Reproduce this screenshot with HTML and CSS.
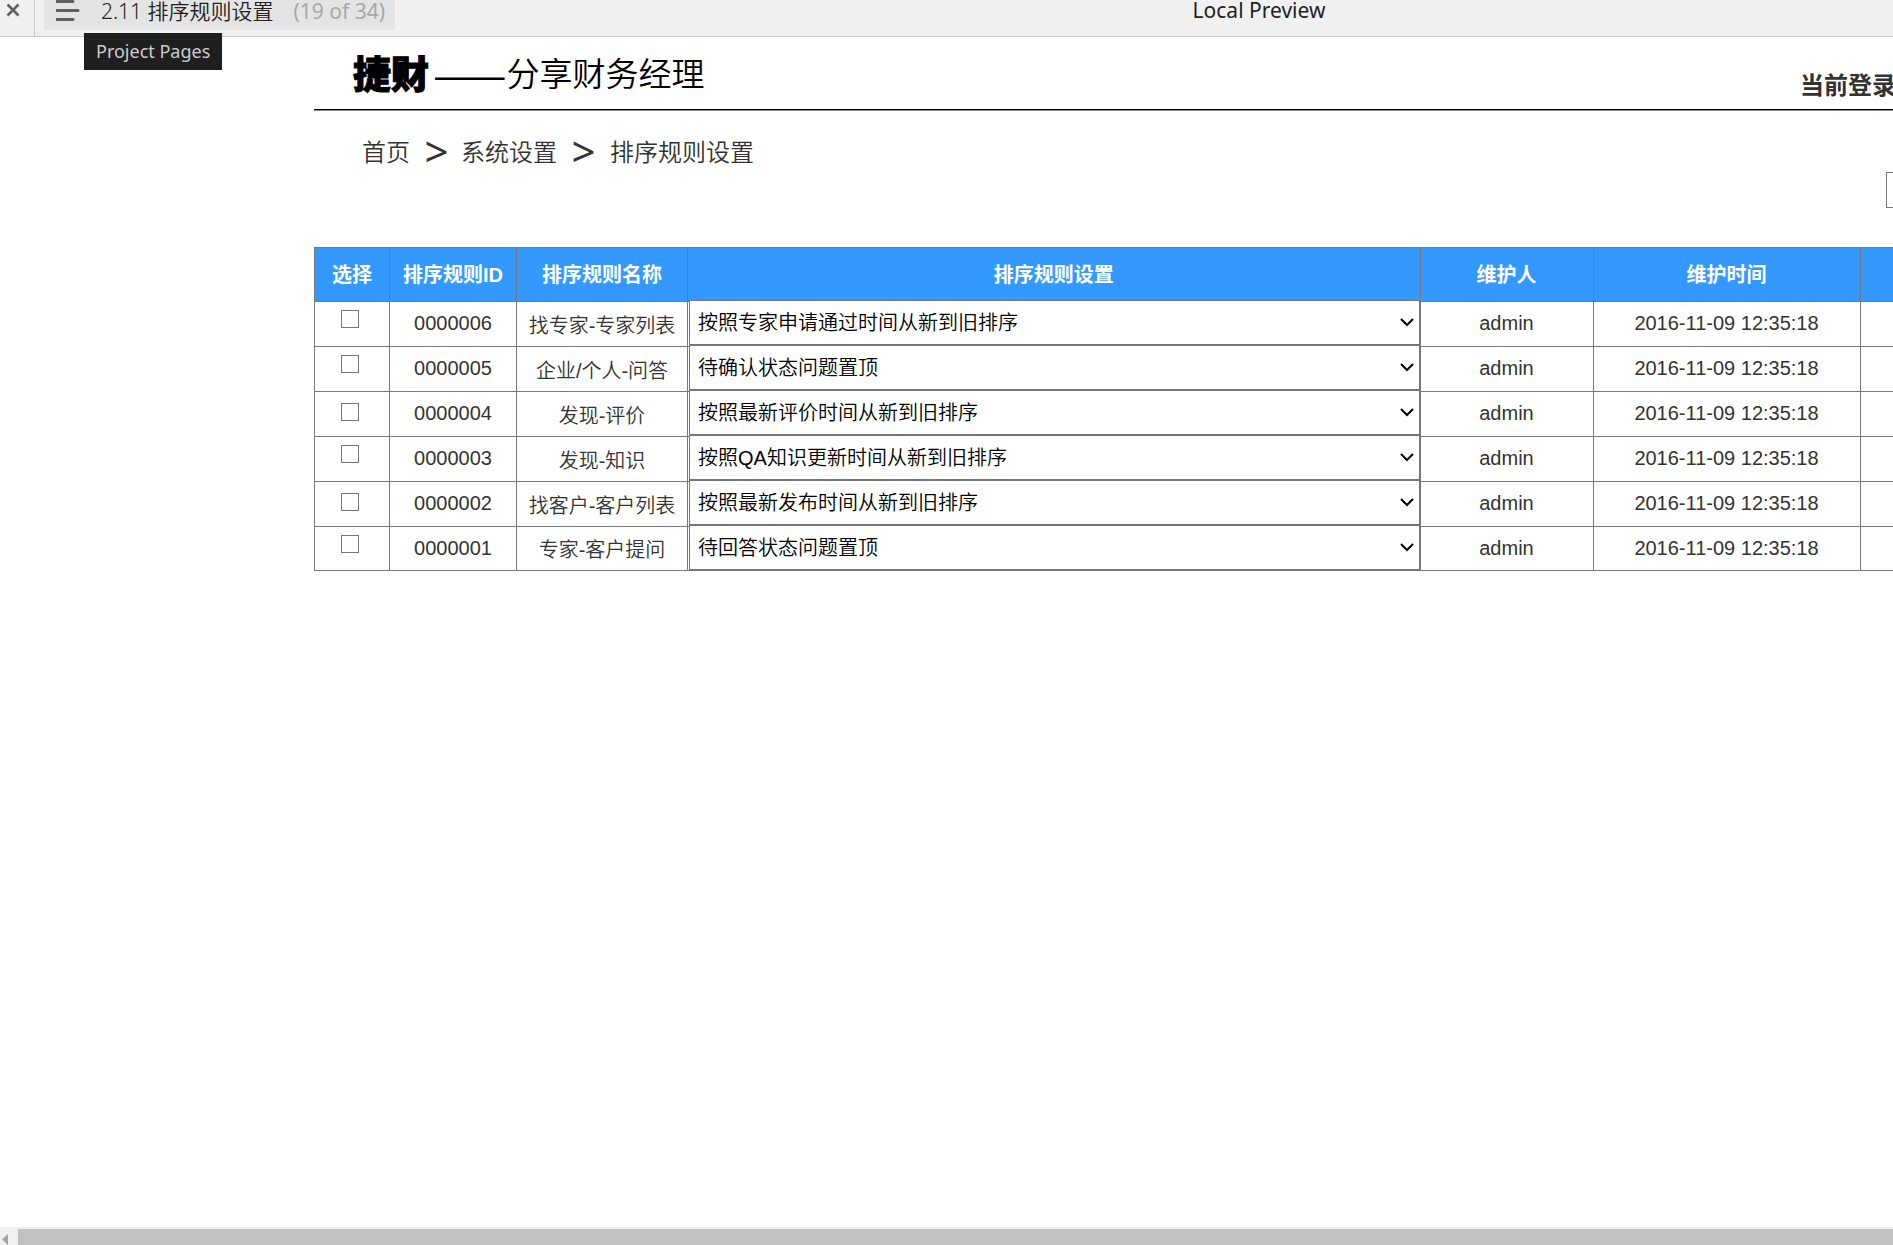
FILE: index.html
```html
<!DOCTYPE html>
<html lang="zh-CN">
<head>
<meta charset="utf-8">
<title>2.11 排序规则设置</title>
<link rel="stylesheet" href="styles.css">
</head>
<body>
<header class="toolbar">
  <button class="close" type="button" aria-label="Close"><svg width="14" height="14" viewBox="0 0 14 14"><path d="M1.5 1.5L12.5 12.5M12.5 1.5L1.5 12.5" stroke="#606060" stroke-width="2.6"/></svg></button>
  <button class="pages" type="button">
    <svg width="24" height="22" viewBox="0 0 24 22"><path d="M1 1.5H17M1 10.5H22M1 19.5H17" stroke="#606060" stroke-width="3" stroke-linecap="round"/></svg>
    <span class="page-name">2.11 排序规则设置</span>
    <span class="count">(19 of 34)</span>
  </button>
  <div class="tooltip" role="tooltip">Project Pages</div>
  <span class="preview">Local Preview</span>
</header>
<main class="content">
  <div class="brand-bar">
    <h1 class="brand"><strong>捷财</strong><span class="dash">——</span><span>分享财务经理</span></h1>
    <div class="login">当前登录</div>
  </div>
  <nav class="crumbs"><a href="#">首页</a><span class="sep">&gt;</span><a href="#">系统设置</a><span class="sep">&gt;</span><a class="here" href="#">排序规则设置</a></nav>
  <div class="search"><input type="text" aria-label="搜索"></div>
  <table class="rules">
    <colgroup><col class="c-pick"><col class="c-id"><col class="c-name"><col><col class="c-user"><col class="c-time"><col class="c-more"></colgroup>
    <thead><tr><th>选择</th><th>排序规则ID</th><th>排序规则名称</th><th>排序规则设置</th><th>维护人</th><th>维护时间</th><th></th></tr></thead>
    <tbody>
      <tr><td class="pick"><input type="checkbox" aria-label="0000006"></td><td>0000006</td><td class="name">找专家-专家列表</td><td class="rule"><div class="field"><select aria-label="排序规则 0000006"><option>按照专家申请通过时间从新到旧排序</option></select><svg class="arrow" viewBox="0 0 14 10"><path d="M1 2L7 8L13 2"/></svg></div></td><td>admin</td><td>2016-11-09 12:35:18</td><td></td></tr>
      <tr><td class="pick"><input type="checkbox" aria-label="0000005"></td><td>0000005</td><td class="name">企业/个人-问答</td><td class="rule"><div class="field"><select aria-label="排序规则 0000005"><option>待确认状态问题置顶</option></select><svg class="arrow" viewBox="0 0 14 10"><path d="M1 2L7 8L13 2"/></svg></div></td><td>admin</td><td>2016-11-09 12:35:18</td><td></td></tr>
      <tr><td class="pick low"><input type="checkbox" aria-label="0000004"></td><td>0000004</td><td class="name">发现-评价</td><td class="rule"><div class="field"><select aria-label="排序规则 0000004"><option>按照最新评价时间从新到旧排序</option></select><svg class="arrow" viewBox="0 0 14 10"><path d="M1 2L7 8L13 2"/></svg></div></td><td>admin</td><td>2016-11-09 12:35:18</td><td></td></tr>
      <tr><td class="pick"><input type="checkbox" aria-label="0000003"></td><td>0000003</td><td class="name">发现-知识</td><td class="rule"><div class="field"><select aria-label="排序规则 0000003"><option>按照QA知识更新时间从新到旧排序</option></select><svg class="arrow" viewBox="0 0 14 10"><path d="M1 2L7 8L13 2"/></svg></div></td><td>admin</td><td>2016-11-09 12:35:18</td><td></td></tr>
      <tr><td class="pick low"><input type="checkbox" aria-label="0000002"></td><td>0000002</td><td class="name">找客户-客户列表</td><td class="rule"><div class="field"><select aria-label="排序规则 0000002"><option>按照最新发布时间从新到旧排序</option></select><svg class="arrow" viewBox="0 0 14 10"><path d="M1 2L7 8L13 2"/></svg></div></td><td>admin</td><td>2016-11-09 12:35:18</td><td></td></tr>
      <tr><td class="pick"><input type="checkbox" aria-label="0000001"></td><td>0000001</td><td class="name">专家-客户提问</td><td class="rule"><div class="field"><select aria-label="排序规则 0000001"><option>待回答状态问题置顶</option></select><svg class="arrow" viewBox="0 0 14 10"><path d="M1 2L7 8L13 2"/></svg></div></td><td>admin</td><td>2016-11-09 12:35:18</td><td></td></tr>
    </tbody>
  </table>
</main>
<div class="scrollbar"><svg width="18" height="18" viewBox="0 0 18 18"><path d="M8 7V18L2 12.5Z" fill="#a3a3a3"/></svg><div class="thumb"></div></div>
</body>
</html>
```
FILE: styles.css
```css
* { box-sizing: border-box; }
body {
  margin: 0;
  min-height: 100vh;
  display: flex;
  flex-direction: column;
  overflow: hidden;
  background: #fff;
  color: #333;
  font: 20px/24px "Liberation Sans", "Noto Sans CJK SC", sans-serif;
}
button { border: 0; padding: 0; background: none; font: inherit; color: inherit; }
a { color: inherit; text-decoration: none; }

.toolbar {
  position: relative;
  display: flex;
  align-items: flex-start;
  height: 37px;
  background: #f0f0f0;
  border-bottom: 1px solid #c4c4c4;
  font: 21px/22px "Noto Sans", "Noto Sans CJK SC", sans-serif;
}
.close {
  width: 35px;
  height: 36px;
  padding: 3px 0 0 6px;
  border-right: 1px solid #c8c8c8;
  display: flex;
}
.pages {
  display: flex;
  height: 30px;
  margin-left: 9px;
  padding: 0 10px 0 12px;
  background: #e4e4e4;
  border-radius: 0 0 4px 4px;
}
.page-name { margin-left: 21px; font-weight: 350; color: #222; white-space: nowrap; }
.count { margin-left: 20px; color: #a8a8a8; white-space: nowrap; }
.tooltip {
  position: absolute;
  left: 84px;
  top: 33px;
  padding: 0 12px;
  font-size: 18px;
  line-height: 37px;
  background: #1f1f1f;
  color: #ccc;
}
.preview { position: absolute; left: 63%; line-height: 20px; color: #222; }

.content { flex: 1; margin-left: 314px; overflow: hidden; }
.brand-bar {
  display: flex;
  justify-content: space-between;
  height: 73px;
  border-bottom: 1px solid #000;
  box-shadow: 0 1px #888;
}
.brand {
  display: flex;
  align-items: center;
  margin: 0;
  padding: 0 0 2px 39px;
  color: #000;
  font-size: 33px;
  font-weight: 350;
  font-family: "Noto Sans CJK SC", sans-serif;
}
.brand strong { font-size: 38px; font-weight: 900; -webkit-text-stroke: 1px #000; }
.dash { margin-left: 4px; font-size: 44px; }
.login { padding: 37px 0 0; width: 93px; font-size: 24px; font-weight: 700; white-space: nowrap; }
.crumbs {
  display: flex;
  align-items: center;
  height: 62px;
  padding: 24px 0 0 48px;
  font-size: 24px;
  font-weight: 350;
}
.sep { width: 51px; padding: 0 0 4px 2px; text-align: center; font: 42px/20px "Noto Sans", sans-serif; }
.here { margin-left: 2px; }
.search { display: flex; justify-content: flex-end; }
.search input { width: 208px; height: 36px; margin-right: -201px; border: 1px solid #767676; }

.rules {
  width: 100%;
  margin-top: 39px;
  table-layout: fixed;
  border-collapse: collapse;
  text-align: center;
}
.c-pick { width: 75px; }
.c-id { width: 127px; }
.c-name { width: 171px; }
.c-user { width: 173px; }
.c-time { width: 267px; }
.c-more { width: 33px; }
th, td { padding: 0; border: 1px solid #797979; }
th:last-child, td:last-child { border-right: 0; }
th { height: 54px; padding-top: 1px; background: #39f; color: #fff; font-weight: 700; }
td { height: 45px; padding-bottom: 2px; }
tr:last-child td { height: 44px; }
td.name { padding: 3px 0 0; font-weight: 350; }
td.pick { padding: 8px 4px 0 0; vertical-align: top; line-height: 0; }
td.pick.low { padding-top: 11px; }
.pick input { appearance: none; width: 18px; height: 18px; margin: 0; border: 1px solid #767676; background: #fff; }
td.rule { padding: 0; vertical-align: top; }
.field { position: relative; margin: -2px 0 0 1px; height: 45px; }
.field select {
  appearance: none;
  display: block;
  width: 100%;
  height: 45px;
  padding: 0 8px;
  border: 1px solid #767676;
  border-radius: 0;
  background: #fff;
  color: #000;
  font: inherit;
  font-weight: 350;
}
.arrow { position: absolute; right: 6px; top: 17px; width: 14px; height: 10px; fill: none; stroke: #000; stroke-width: 2; }

.scrollbar { display: flex; height: 18px; background: #f1f1f1; }
.thumb { flex: 1; margin-top: 2px; background: #c1c1c1; }
```
